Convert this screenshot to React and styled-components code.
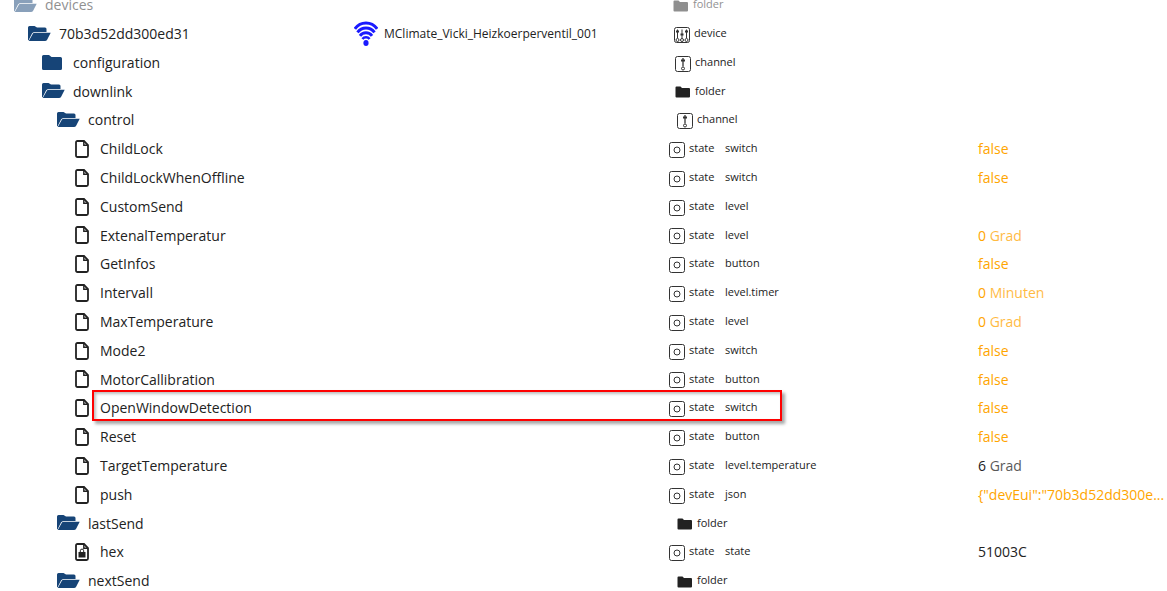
import { Fragment } from "react"
import styled, { createGlobalStyle } from "styled-components"

const GlobalStyle = createGlobalStyle`
    body {
        margin: 0;
        background-color: white;
        font-family: "Open Sans", "Noto Sans", sans-serif;
        overflow: hidden;
    }
    svg {
        flex-shrink: 0;
    }
`
const Table = styled.table`
    display: block;
    margin-top: -10px;
    color: #222;
`
const Body = styled.tbody`
    display: block;
`
const Row = styled.tr`
    display: grid;
    grid-template-columns: 354fr 314fr 57px 253fr 189fr;
    align-items: center;
    height: 29px;
    position: relative;
    opacity: ${({ $faded }) => $faded ? 0.5 : 1};
    &:nth-child(5n + 4) {
        height: 28px;
    }
`
const indents = [14, 28, 42, 57, 75]
const NameCell = styled.td`
    display: flex;
    align-items: center;
    gap: ${({ $level }) => $level === 4 ? 11 : 7}px;
    padding: 0 0 0 ${({ $level }) => indents[$level]}px;
    font-size: 14px;
    white-space: nowrap;
`
const TitleCell = styled.td`
    display: flex;
    align-items: center;
    gap: 6px;
    padding: 0;
    font-size: 12px;
    white-space: nowrap;
`
const TypeCell = styled.td`
    display: flex;
    align-items: center;
    gap: 4px;
    padding: 2px 0 0 ${({ $indent }) => $indent}px;
    font-size: 11px;
    white-space: nowrap;
`
const RoleCell = styled.td`
    padding: 0 0 2px;
    font-size: 11px;
`
const TypeText = styled.span`
    padding-bottom: 4px;
`
const ValueCell = styled.td`
    padding: 0;
    font-size: 14px;
    white-space: nowrap;
    color: ${({ $pending }) => $pending ? "#ffa500" : "#222"};
`
const Unit = styled.span`
    opacity: 0.75;
`
const Marker = styled.td`
    position: absolute;
    top: -3px;
    left: 92px;
    right: 33%;
    height: 27px;
    padding: 0;
    border: 2px solid #f00;
    box-shadow: 3px 3px 3px rgba(0, 0, 0, 0.35), inset 2px 2px 3px rgba(0, 0, 0, 0.25);
`

const OpenFolder = () => (
    <svg width="24" height="16" viewBox="0 0 24 16" fill="#164477">
        <path d="M0 14.300V1.500Q0 0 1.500 0H6.500L9 1.500H17Q18.500 1.500 18.500 3V6H6.500Q4.800 6 4 7.500L0.600 14.300Z" />
        <path d="M0.800 15L4.700 8Q5.300 6.700 6.700 6.700H22.700L19 14Q18.400 15 17 15Z" />
    </svg>
)
const ClosedFolder = () => (
    <svg width="24" height="16" viewBox="0 0 24 16" fill="#164477">
        <path d="M0 13.500V1.500Q0 0 1.500 0H7l2.500 2H18.500Q20 2 20 3.500V13.500Q20 15 18.500 15H1.500Q0 15 0 13.500Z" />
    </svg>
)
const FileIcon = ({ locked }) => (
    <svg width="14" height="18" viewBox="0 0 14 18" fill="none" stroke="#222" strokeWidth="1.800">
        <path d="M2.500 1H9L13 5V15.500Q13 17 11.500 17H2.500Q1 17 1 15.500V2.500Q1 1 2.500 1Z" />
        <path d="M8.800 1V5.200H13" strokeWidth="1.400" />
        {locked && (
            <Fragment>
                <rect x="3.500" y="9" width="7" height="5.500" fill="#222" stroke="none" />
                <path d="M5.300 9V7.800a1.700 1.700 0 0 1 3.400 0V9" strokeWidth="1" />
            </Fragment>
        )}
    </svg>
)
const WifiIcon = () => (
    <svg width="24" height="25" viewBox="0 0 24 25" fill="none" stroke="#1a1aff" strokeWidth="2.900">
        <path d="M0.900 7.800A13.500 13.500 0 0 1 23.100 7.800" />
        <path d="M3.500 11.400A10.400 10.400 0 0 1 20.500 11.400" />
        <path d="M6 14.800A7.400 7.400 0 0 1 18 14.800" />
        <path d="M8.400 18A4.500 4.500 0 0 1 15.600 18" strokeWidth="2.400" />
        <ellipse cx="12" cy="22" rx="2.600" ry="2.900" fill="#1a1aff" stroke="none" />
    </svg>
)

const SmallFolder = () => (
    <svg width="16" height="16" viewBox="0 0 16 16" fill="#222">
        <path d="M0.500 12.500V3.500Q0.500 2.500 1.500 2.500H5.500L7 4H14Q15 4 15 5V12.500Q15 13.500 14 13.500H1.500Q0.500 13.500 0.500 12.500Z" />
    </svg>
)
const Frame = ({ children }) => (
    <svg width="16" height="16" viewBox="0 0 16 16" fill="none" stroke="#333">
        <rect x="0.500" y="0.500" width="15" height="15" rx="2" />
        {children}
    </svg>
)
const DeviceIcon = () => (
    <Frame>
        <path d="M3.500 2.500V11M8 2.500V11M12.500 2.500V11" />
        <path d="M2 4.500H5M6.500 7.500H9.500M11 4.500H14" strokeWidth="2" />
        <circle cx="3.500" cy="13" r="1.500" />
        <circle cx="8" cy="13" r="1.500" />
        <circle cx="12.500" cy="13" r="1.500" />
    </Frame>
)
const ChannelIcon = () => (
    <Frame>
        <path d="M8 2V10.500" strokeWidth="1.300" />
        <path d="M6 4.500H10" strokeWidth="2" />
        <circle cx="8" cy="12.500" r="1.500" />
    </Frame>
)
const StateIcon = () => (
    <Frame>
        <circle cx="8" cy="8" r="3" />
    </Frame>
)

const typeIcons = {
    folder: SmallFolder,
    device: DeviceIcon,
    channel: ChannelIcon,
    state: StateIcon,
}

const rows = [
    { name: "devices", level: 0, type: "folder", indent: 5, open: true, faded: true },
    { name: "70b3d52dd300ed31", level: 1, type: "device", indent: 6, open: true, title: "MClimate_Vicki_Heizkoerperventil_001" },
    { name: "configuration", level: 2, type: "channel", indent: 7 },
    { name: "downlink", level: 2, type: "folder", indent: 7, open: true },
    { name: "control", level: 3, type: "channel", indent: 9, open: true },
    { name: "ChildLock", level: 4, type: "state", role: "switch", value: "false", pending: true },
    { name: "ChildLockWhenOffline", level: 4, type: "state", role: "switch", value: "false", pending: true },
    { name: "CustomSend", level: 4, type: "state", role: "level" },
    { name: "ExtenalTemperatur", level: 4, type: "state", role: "level", value: "0", unit: "Grad", pending: true },
    { name: "GetInfos", level: 4, type: "state", role: "button", value: "false", pending: true },
    { name: "Intervall", level: 4, type: "state", role: "level.timer", value: "0", unit: "Minuten", pending: true },
    { name: "MaxTemperature", level: 4, type: "state", role: "level", value: "0", unit: "Grad", pending: true },
    { name: "Mode2", level: 4, type: "state", role: "switch", value: "false", pending: true },
    { name: "MotorCallibration", level: 4, type: "state", role: "button", value: "false", pending: true },
    { name: "OpenWindowDetection", level: 4, type: "state", role: "switch", value: "false", pending: true, marked: true },
    { name: "Reset", level: 4, type: "state", role: "button", value: "false", pending: true },
    { name: "TargetTemperature", level: 4, type: "state", role: "level.temperature", value: "6", unit: "Grad" },
    { name: "push", level: 4, type: "state", role: "json", value: "{\"devEui\":\"70b3d52dd300e...", pending: true },
    { name: "lastSend", level: 3, type: "folder", indent: 9, open: true },
    { name: "hex", level: 4, type: "state", role: "state", value: "51003C", locked: true },
    { name: "nextSend", level: 3, type: "folder", indent: 9, open: true },
]

const ObjectRow = ({ item }) => {
    const TypeIcon = typeIcons[item.type]
    const FolderIcon = item.open ? OpenFolder : ClosedFolder
    return (
        <Row $faded={item.faded}>
            <NameCell $level={item.level}>
                {item.level === 4 ? <FileIcon locked={item.locked} /> : <FolderIcon />}
                <span>{item.name}</span>
            </NameCell>
            <TitleCell>
                {item.title && <WifiIcon />}
                {item.title}
            </TitleCell>
            <TypeCell $indent={item.indent || 1}>
                <TypeIcon />
                <TypeText>{item.type}</TypeText>
            </TypeCell>
            <RoleCell>{item.role}</RoleCell>
            <ValueCell $pending={item.pending}>
                {item.value}
                {item.unit && <Unit> {item.unit}</Unit>}
            </ValueCell>
            {item.marked && <Marker />}
        </Row>
    )
}

const App = () => (
    <Fragment>
        <GlobalStyle />
        <Table>
            <Body>
                {rows.map(item => <ObjectRow key={item.name} item={item} />)}
            </Body>
        </Table>
    </Fragment>
)

export default App
